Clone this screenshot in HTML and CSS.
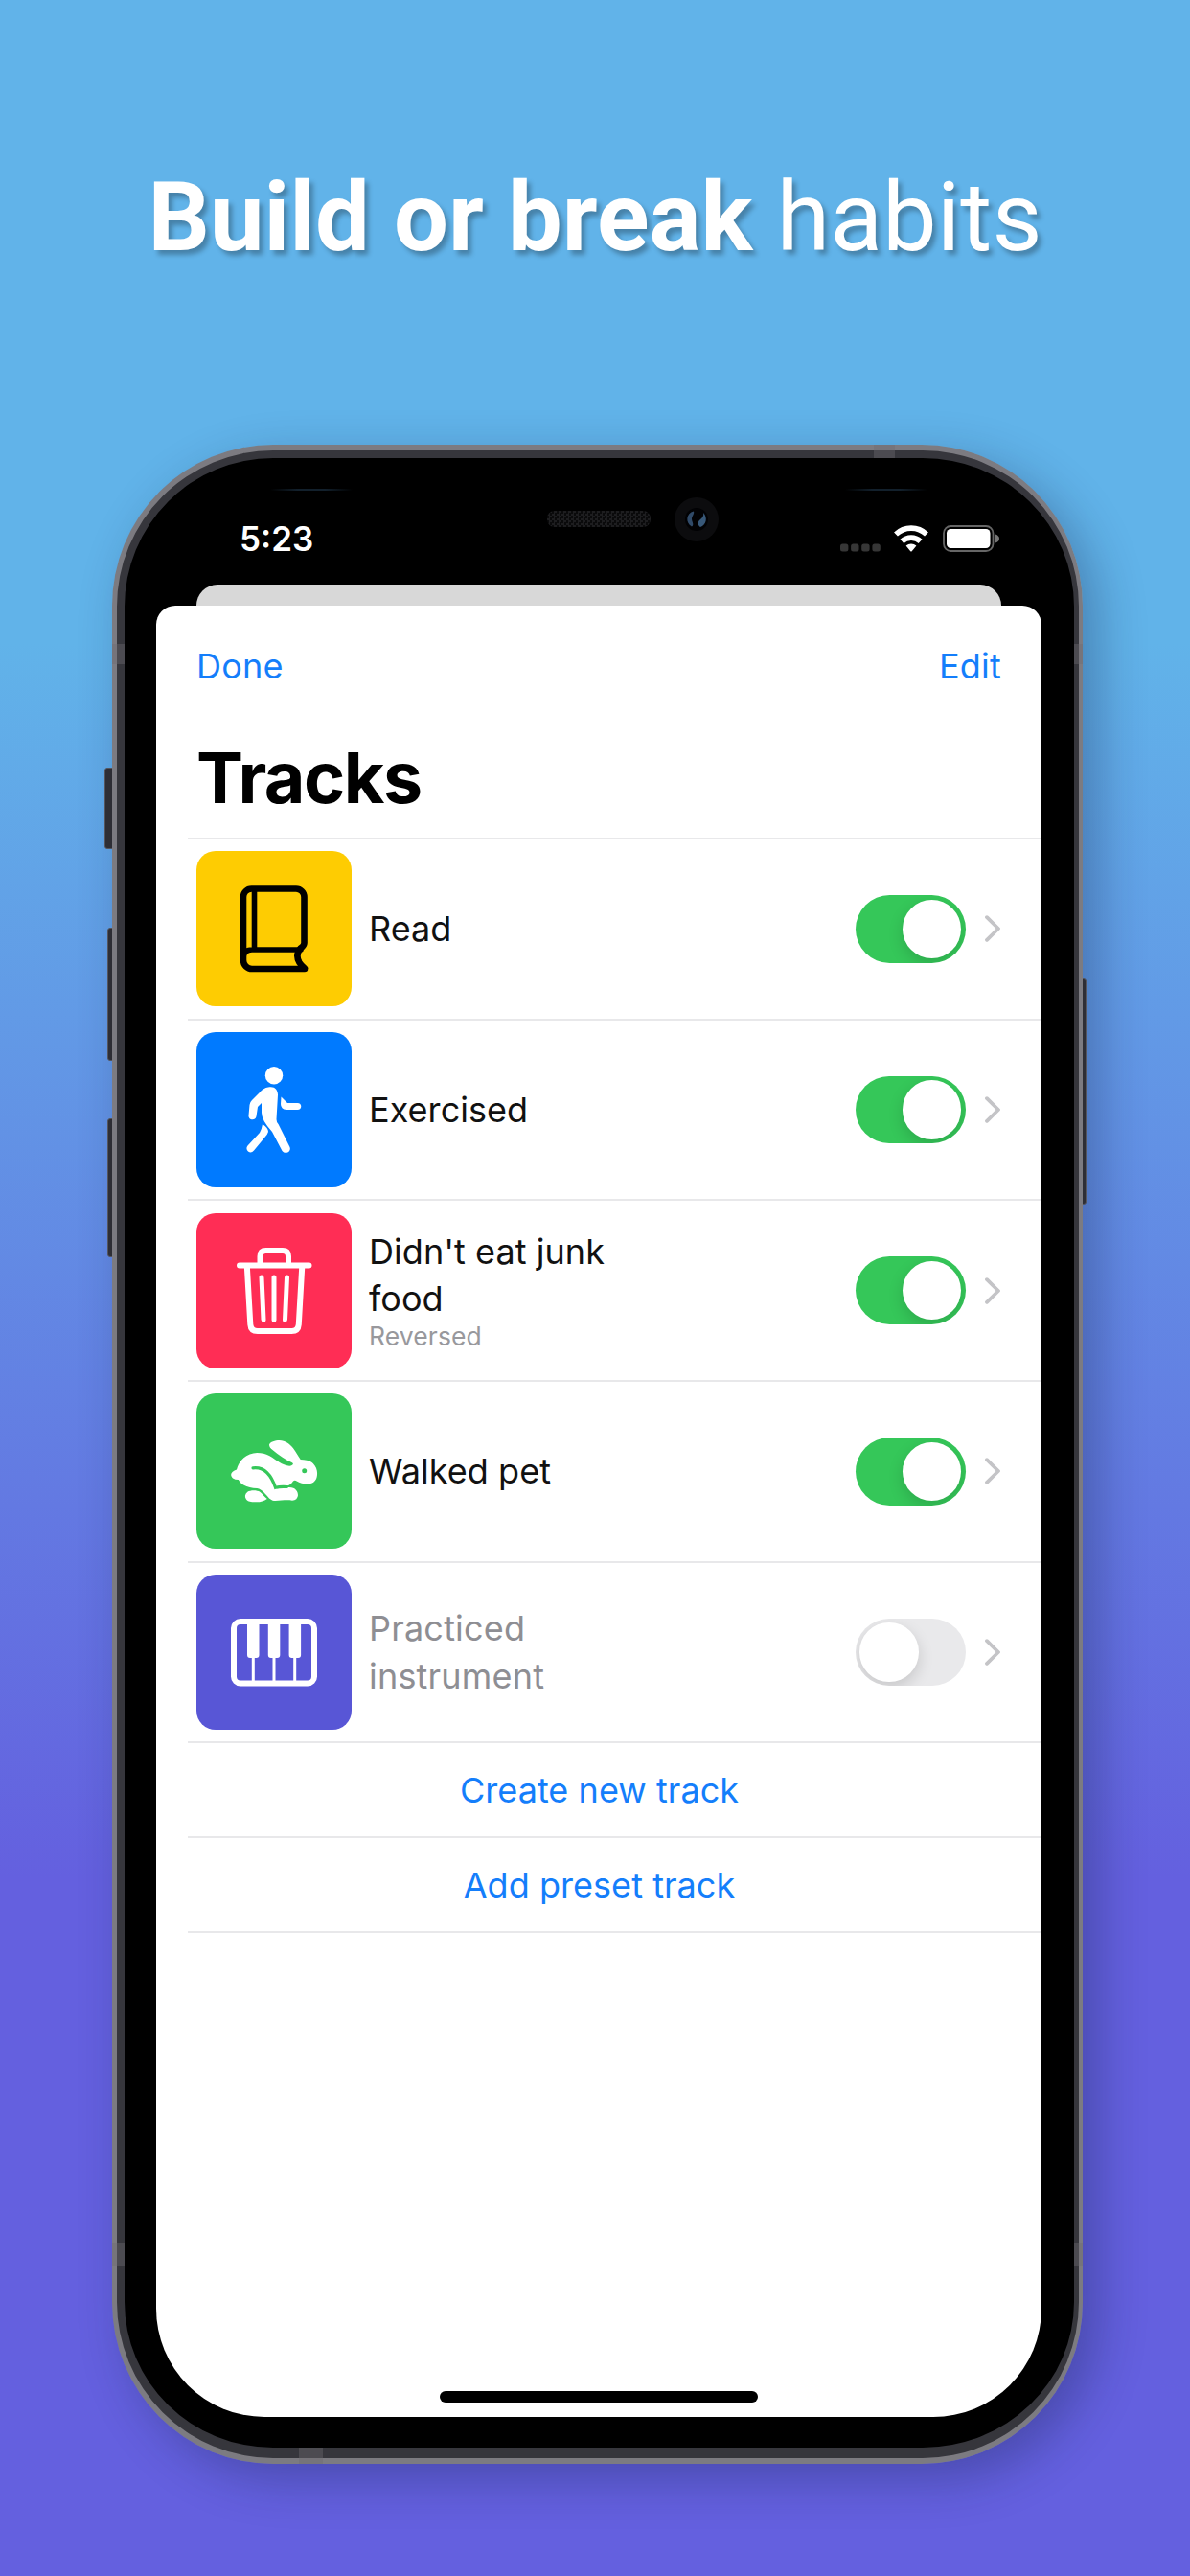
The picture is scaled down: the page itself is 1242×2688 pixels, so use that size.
FILE: index.html
```html
<!DOCTYPE html>
<html lang="en">
<head>
<meta charset="utf-8">
<title>Tracks</title>
<link rel="stylesheet" href="styles.css">
</head>
<body>
<main class="poster">
  <h1 class="headline"><span class="headline-bold">Build or break</span> <span class="headline-light">habits</span></h1>
  <div class="phone">
    <i class="button mute"></i><i class="button vol-up"></i><i class="button vol-down"></i><i class="button power"></i>
    <div class="rim">
      <i class="band b1"></i><i class="band b2"></i><i class="band b3"></i><i class="band b4"></i><i class="band b5"></i><i class="band b6"></i>
      <div class="bezel">
        <i class="glint left"></i><i class="glint right"></i><i class="speaker"></i>
        <svg class="camera" viewBox="0 0 46 46"><circle cx="23" cy="23" r="23" fill="#0c0c0e"/><circle cx="23" cy="23" r="12" fill="#020204"/><path d="M20 14.500c-8 2-9 12-2 16 3-2 0-5 0-8s3-5 2-8z" fill="#304a68"/><path d="M30 16c5 5 3 13-3 15-3-2-3-5-1-7s5-4 4-8z" fill="#385878"/></svg>
        <header class="status">
          <span class="time">5:23</span>
          <span class="signals">
            <svg class="cell" width="42" height="28" viewBox="0 0 42 28"><g fill="#363636"><rect y="19.500" width="8.4" height="8" rx="2.5"/><rect x="11.1" y="19.500" width="8.4" height="8" rx="2.5"/><rect x="22.2" y="19.500" width="8.4" height="8" rx="2.5"/><rect x="33.4" y="19.500" width="8.4" height="8" rx="2.5"/></g></svg>
            <svg class="wifi" width="36" height="28" viewBox="0 0 36 28"><g fill="none" stroke="#fff" stroke-width="5.6"><path d="M2 9.6a23 23 0 0 1 32 0"/><path d="M8.4 16.9a14 14 0 0 1 19.2 0"/></g><path d="M12.6 21.6a8 8 0 0 1 10.8 0L18.7 27.2q-.7.7-1.4 0z" fill="#fff"/></svg>
            <svg class="battery" width="60" height="28" viewBox="0 0 60 28"><rect x="1" y="1" width="51.5" height="26" rx="7.5" fill="none" stroke="#666" stroke-width="1.8"/><rect x="4" y="4" width="45.5" height="20" rx="4.5" fill="#fff"/><path d="M55 9.5q4 1.500 4 4.500t-4 4.500z" fill="#777"/></svg>
          </span>
        </header>
        <div class="backsheet"></div>
        <section class="sheet">
          <nav class="nav"><span class="done">Done</span><span class="edit">Edit</span></nav>
          <h2 class="title">Tracks</h2>
          <ul class="list">
            <li class="row">
              <div class="tile yellow"><svg viewBox="0 0 162 162"><g fill="none" stroke="#000" stroke-width="6.600" stroke-linejoin="round" stroke-linecap="round"><path d="M113 123H58a9 9 0 0 1-9-9V48a8.500 8.500 0 0 1 8.500-8.500H104a8.500 8.500 0 0 1 8.500 8.500V96q0 3-4 5.500c-4 5-4 10-1 15q2 3 5.500 6"/><path d="M49 112q0-9 9-9h51M60.500 40v62" stroke-width="5.600"/></g></svg></div>
              <div class="label"><span>Read</span></div>
              <span class="toggle on"><i></i></span><svg class="chevron" viewBox="0 0 16 28"><path d="M2 2.200 14 14 2 25.800"/></svg>
            </li>
            <li class="row">
              <div class="tile blue"><svg viewBox="0 0 162 162"><g fill="#fff"><circle cx="81" cy="45.300" r="9.200"/><path d="M75 57.500c6-1.500 10 2 10 8L83.500 91q0 3 2 5L97.500 120c2 5-5 8-8 4L79 104Q68 92 68 84V74l-4 4-1.500 10c-1 5-8.500 4-8-1l1-11q.3-3 2.500-5l8-8q4-5 9-5.500z"/><path d="M69 96q6 4 6 8-1 3-3 5L60 123.500c-4 5-10-1-6.500-5L66 105q2-3 3-9z"/><path d="M88.500 67.500 95 74h10.500c5 0 5 7 0 7H94q-6-.5-6-6z"/></g></svg></div>
              <div class="label"><span>Exercised</span></div>
              <span class="toggle on"><i></i></span><svg class="chevron" viewBox="0 0 16 28"><path d="M2 2.200 14 14 2 25.800"/></svg>
            </li>
            <li class="row">
              <div class="tile pink"><svg viewBox="0 0 162 162"><g fill="none" stroke="#fff" stroke-linecap="round" stroke-linejoin="round"><path stroke-width="6" d="M45 54.500h72.500M66.500 54v-9q0-6 6-6h17.500q6 0 6 6v9M52.800 55l3.500 61q.5 7 7.500 7h35.500q7 0 7.500-7l3.500-61"/><path stroke-width="5" d="M68 67l2 44M81 67v44M94.500 67l-2 44"/></g></svg></div>
              <div class="label noted"><span>Didn't eat junk<br>food</span><small class="note">Reversed</small></div>
              <span class="toggle on"><i></i></span><svg class="chevron" viewBox="0 0 16 28"><path d="M2 2.200 14 14 2 25.800"/></svg>
            </li>
            <li class="row">
              <div class="tile green"><svg viewBox="0 0 162 162"><g fill="#fff"><path d="M76 53.500C77 50.500 82 49 86.700 49c6 0 11 4 14.500 8.500 3 4 5 8 7.500 11.500 5 0 10 1 13 4 4 4 5 9 4 14-1 5-5 7.500-10 7.500-4 0-8-1-11-3q-2-1.500-3.700 0c-2 3-4 4.500-7 5l-11 .7q-1 1.500 1 2l11-1c8-1 11 4 11 8q-.5 5-6 5.500c-7-1-12 .5-19 .3-4-.5-6-4-9.500-7.500q-4-5-8.200-5.500c-6-.5-10-1-15-4q-3-2-4.500-5-3.500 0-5.800-1.500c-4-4-1-7.500 4-9C45 68 54 62 63.300 61.900c5 0 9 1 12.700 3 5 3 9 6 13 8.300q6 3 9.500 2.300c3-1 3-2.500 1-3.500-7-3-14-8-20-13q-3.500-2.500-3.500-5.500z"/><path d="M53.300 102.800c3-2 10-2 13 0 3 2.500 4.500 5 7.500 7.200-3 2.500-7 3.300-10.500 3.300-5 0-9 .3-11.500-3q-2.500-4 1.500-7.500z"/></g><path d="M59 77.800c12-1.500 19 7 23.500 20.500q5-1.300 12-.8" fill="none" stroke="#35c759" stroke-width="3.200" stroke-linecap="round"/><circle cx="112.700" cy="80.700" r="2.500" fill="#35c759"/></svg></div>
              <div class="label"><span>Walked pet</span></div>
              <span class="toggle on"><i></i></span><svg class="chevron" viewBox="0 0 16 28"><path d="M2 2.200 14 14 2 25.800"/></svg>
            </li>
            <li class="row">
              <div class="tile indigo"><svg viewBox="0 0 162 162"><rect x="39" y="49" width="84" height="64.500" rx="7" fill="none" stroke="#fff" stroke-width="6"/><g fill="#fff"><path d="M53 51h12.500v33q0 3-3 3h-6.500q-3 0-3-3zM74.800 51h12.500v33q0 3-3 3h-6.500q-3 0-3-3zM96.600 51h12.500v33q0 3-3 3h-6.500q-3 0-3-3z"/><path d="M57.800 86h3v26h-3zM79.500 86h3v26h-3zM101.200 86h3v26h-3z"/></g></svg></div>
              <div class="label muted"><span>Practiced<br>instrument</span></div>
              <span class="toggle"><i></i></span><svg class="chevron" viewBox="0 0 16 28"><path d="M2 2.200 14 14 2 25.800"/></svg>
            </li>
            <li class="action">Create new track</li>
            <li class="action">Add preset track</li>
          </ul>
          <div class="home"></div>
        </section>
      </div>
    </div>
  </div>
</main>
</body>
</html>
```
FILE: styles.css
```css
* { box-sizing: border-box; }
body { margin: 0; font-family: Inter, "Liberation Sans", sans-serif; }
.poster {
  width: 1242px; height: 2688px; overflow: hidden;
  background: linear-gradient(180deg, #61b3e9 0, #61b3e9 670px, #6460df 1960px, #6460df 100%);
}
.headline {
  margin: 0; height: 464px; padding-top: 168px;
  font: 400 101px/118px Roboto, sans-serif; color: #fff;
  text-align: center; white-space: nowrap;
  text-shadow: 4px 5px 5px rgba(0,0,0,.28);
}
.headline-bold { font-weight: 700; }
.phone { position: relative; width: 1013px; height: 2107px; margin-left: 117px; border-radius: 168px; box-shadow: 16px 16px 50px rgba(20,30,70,.32); }
.rim {
  position: relative; height: 100%; padding: 6px 4px 6px 5px; border-radius: 168px;
  background: #7c7b81;
}
.bezel {
  position: relative; height: 100%; padding: 0 34px 34px 33px; border-radius: 163px;
  background: #000; border: 8px solid #36363c; border-right-width: 5px; border-bottom-width: 11px;
}
.button { position: absolute; background: #2e2e35; border: 1px solid #55565f; border-radius: 3px 0 0 3px; }
.mute { left: -8px; top: 337px; width: 9px; height: 85px; }
.vol-up { left: -5px; top: 504px; width: 6px; height: 139px; }
.vol-down { left: -5px; top: 703px; width: 6px; height: 145px; }
.power { right: -4px; top: 557px; width: 6px; height: 236px; border-radius: 0 3px 3px 0; }
.band { position: absolute; z-index: 1; background: rgba(110,108,112,.4); }
.b1 { left: 0; top: 208px; width: 13px; height: 21px; }
.b2 { right: 0; top: 208px; width: 9px; height: 21px; }
.b3 { left: 795px; top: 0; width: 22px; height: 14px; }
.b4 { left: 0; top: 1876px; width: 13px; height: 25px; }
.b5 { right: 0; top: 1876px; width: 9px; height: 25px; }
.b6 { left: 195px; bottom: 0; width: 25px; height: 17px; }
.glint { position: absolute; top: 32px; width: 86px; height: 2px; background: linear-gradient(90deg, transparent, #12202c, #12202c, transparent); }
.glint.left { left: 152px; }
.glint.right { left: 752px; }
.speaker { position: absolute; left: 441px; top: 55px; width: 108px; height: 17px; border-radius: 8px; background: repeating-conic-gradient(#1d1d1f 0 25%, #0a0a0b 0 50%) 0 0 / 5px 5px; }
.camera { position: absolute; left: 574px; top: 41px; width: 46px; height: 46px; }
.status { height: 131.500px; padding: 70px 43px 0 87px; display: flex; justify-content: space-between; align-items: flex-start; }
.time { font-size: 35px; font-weight: 600; line-height: 28px; color: #fff; }
.signals { display: flex; }
.wifi { margin-left: 14px; }
.battery { margin-left: 15px; }
.backsheet { height: 22.500px; margin: 0 42px; border-radius: 22px 22px 0 0; background: #d8d8d8; }
.sheet { position: relative; height: 1890px; background: #fff; border-radius: 20px 20px 113px 113px; overflow: hidden; color: #000; }
.nav { display: flex; justify-content: space-between; padding: 41px 42px 0 42px; line-height: 44px; font-size: 36px; color: #147efb; letter-spacing: .2px; }
.title { margin: 0; padding: 51px 0 0 42px; font-size: 73.500px; line-height: 88px; font-weight: 700; letter-spacing: -1.500px; }
.list { list-style: none; margin: 18px 0 0 33px; padding: 0; border-top: 2px solid #e8e8ea; }
.row { height: 188.700px; border-bottom: 2px solid #e8e8ea; padding: 0 43.500px 0 9px; display: flex; align-items: center; }
.tile { width: 162px; height: 162px; border-radius: 20px; flex: none; }
.tile svg { display: block; width: 162px; height: 162px; }
.yellow { background: #fecc02; }
.blue { background: #007aff; }
.pink { background: #ff2d55; }
.green { background: #35c759; }
.indigo { background: #5856d6; }
.label { flex: 1; padding: 1px 0 0 18px; font-size: 36px; line-height: 49.300px; white-space: nowrap; color: #111; letter-spacing: .05px; }
.label > span, .note { display: block; }
.noted { padding: 0 0 4px 18px; }
.note { margin-top: -1px; font-size: 26.500px; line-height: 28px; color: #98989c; letter-spacing: .1px; }
.label.muted { color: #8e8e93; letter-spacing: .2px; }
.toggle { width: 115px; height: 70.500px; border-radius: 36px; background: #e9e9eb; padding: 4.500px; display: flex; overflow: hidden; margin-right: 20px; }
.toggle i { width: 61.500px; height: 61.500px; border-radius: 50%; background: #fff; box-shadow: 0 6px 16px rgba(0,0,0,.15); }
.toggle.on { background: #35c759; justify-content: flex-end; }
.chevron { width: 16px; height: 28px; fill: none; stroke: #c4c4c7; stroke-width: 3.800; stroke-linecap: round; stroke-linejoin: round; }
.action { height: 98.700px; border-bottom: 2px solid #e8e8ea; text-align: center; font-size: 36px; line-height: 99px; color: #147efb; padding-right: 32px; letter-spacing: .05px; }
.home { position: absolute; left: 295.500px; bottom: 15.500px; width: 332px; height: 11.500px; border-radius: 6px; background: #000; }
```
